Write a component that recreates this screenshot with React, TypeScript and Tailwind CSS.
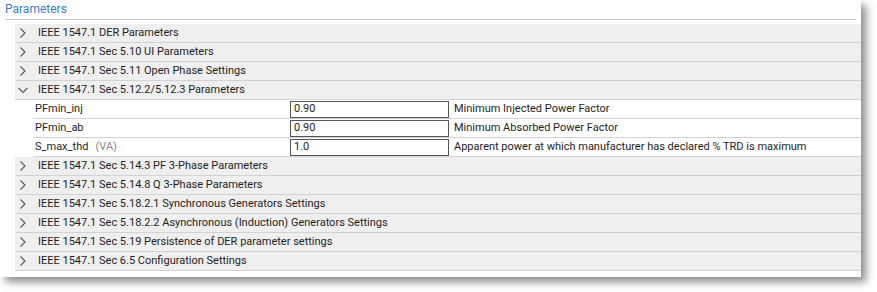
const groups = [
  'IEEE 1547.1 DER Parameters',
  'IEEE 1547.1 Sec 5.10 UI Parameters',
  'IEEE 1547.1 Sec 5.11 Open Phase Settings',
  'IEEE 1547.1 Sec 5.12.2/5.12.3 Parameters',
  'IEEE 1547.1 Sec 5.14.3 PF 3-Phase Parameters',
  'IEEE 1547.1 Sec 5.14.8 Q 3-Phase Parameters',
  'IEEE 1547.1 Sec 5.18.2.1 Synchronous Generators Settings',
  'IEEE 1547.1 Sec 5.18.2.2 Asynchronous (Induction) Generators Settings',
  'IEEE 1547.1 Sec 5.19 Persistence of DER parameter settings',
  'IEEE 1547.1 Sec 6.5 Configuration Settings',
];

const params = [
  { name: 'PFmin_inj', value: '0.90', desc: 'Minimum Injected Power Factor' },
  { name: 'PFmin_ab', value: '0.90', desc: 'Minimum Absorbed Power Factor' },
  { name: 'S_max_thd', unit: '(VA)', value: '1.0', desc: 'Apparent power at which manufacturer has declared % TRD is maximum' },
];

function Chevron({ open }: { open?: boolean }) {
  return (
    <svg width="12" height="12" viewBox="0 0 12 12" className="shrink-0">
      {open ? (
        <path d="M1.5 4 L6 8.5 L10.5 4" fill="none" stroke="#555" strokeWidth="1.1" />
      ) : (
        <path d="M3.5 1.5 L8 6 L3.5 10.5" fill="none" stroke="#555" strokeWidth="1.1" />
      )}
    </svg>
  );
}

function GroupRow({ title, open }: { title: string; open?: boolean }) {
  return (
    <div className="flex h-[19px] items-center gap-[9px] border-b border-[#d2d2d2] bg-[#efefef] pl-[2px]">
      <Chevron open={open} />
      <span className="text-[11px] text-[#1e1e1e]">{title}</span>
    </div>
  );
}

function ParamRow({ name, unit, value, desc }: { name: string; unit?: string; value: string; desc: string }) {
  return (
    <div className="ml-[18px] flex h-[19px] items-center border-b border-[#d2d2d2] bg-white">
      <div className="w-[257px] pl-[2px] text-[11px] text-[#1e1e1e]">
        {name}
        {unit && <span className="ml-[7px] text-[#8a8a8a]">{unit}</span>}
      </div>
      <div className="flex h-[17px] w-[159px] items-center border border-[#555] pl-[3px] text-[11px] text-[#1e1e1e]">
        {value}
      </div>
      <div className="pl-[5px] text-[11px] text-[#1e1e1e]">{desc}</div>
    </div>
  );
}

export default function App() {
  return (
    <div className="h-[292px] w-[877px] bg-white font-['Roboto',sans-serif]">
      <div className="w-[861px] bg-white pb-[6px] pt-[1px] shadow-[5px_5px_8px_rgba(0,0,0,0.45)]">
        <div className="mx-[5px] border-b border-[#c8c8c8] pb-[3px] pt-[1px] text-[12px] leading-[14px] text-[#3b7bc8]">
          Parameters
        </div>
        <div className="ml-[15px] mt-[4px]">
          {groups.slice(0, 4).map((g, i) => (
            <GroupRow key={g} title={g} open={i === 3} />
          ))}
          {params.map((p) => (
            <ParamRow key={p.name} {...p} />
          ))}
          {groups.slice(4).map((g) => (
            <GroupRow key={g} title={g} />
          ))}
        </div>
      </div>
    </div>
  );
}
